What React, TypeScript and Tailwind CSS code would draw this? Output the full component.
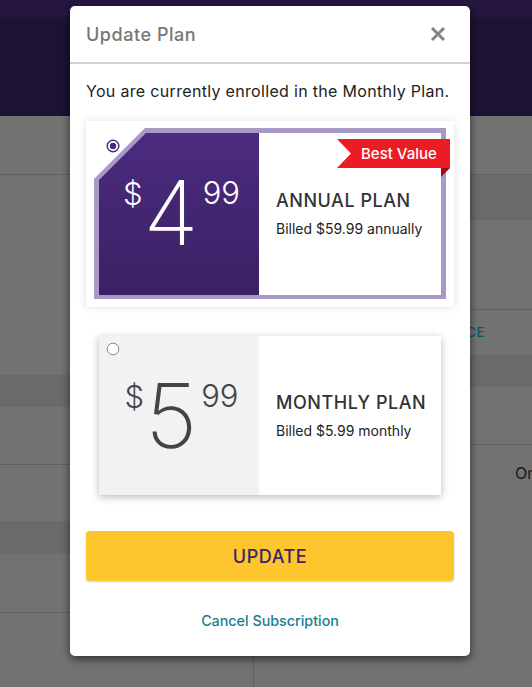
import React, { useState } from 'react';

type Plan = {
    id: string;
    dollars: string;
    cents: string;
    title: string;
    billed: string;
};

const plans: Plan[] = [
    { id: 'annual', dollars: '4', cents: '99', title: 'ANNUAL PLAN', billed: 'Billed $59.99 annually' },
    { id: 'monthly', dollars: '5', cents: '99', title: 'MONTHLY PLAN', billed: 'Billed $5.99 monthly' },
];

const Radio: React.FC<{ checked: boolean }> = ({ checked }) => (
    <svg width="14" height="14" viewBox="0 0 14 14" className="block">
        {checked ? (
            <>
                <circle cx="7" cy="7" r="5.8" fill="white" stroke="#4a2a7e" strokeWidth="1.4" />
                <circle cx="7" cy="7" r="3.2" fill="#4a2a7e" />
            </>
        ) : (
            <circle cx="7" cy="7" r="5.8" fill="white" stroke="#8a8a8a" strokeWidth="1" />
        )}
    </svg>
);

const Price: React.FC<{ plan: Plan; selected: boolean }> = ({ plan, selected }) => (
    <div className={`flex justify-center items-start pt-[35px] pl-[5px] ${selected ? 'text-white' : 'text-[#444]'}`}>
        <span className="text-[31px] leading-none font-light mt-[10px] mr-[1px]">$</span>
        <span className="text-[90px] leading-none font-extralight">{plan.dollars}</span>
        <span className="text-[31px] leading-none font-light mt-[9px] ml-[4px]">{plan.cents}</span>
    </div>
);

const PlanText: React.FC<{ plan: Plan }> = ({ plan }) => (
    <div className="flex-1 flex flex-col justify-center pl-[17px] bg-white">
        <div className="text-[18px] leading-none font-medium tracking-[0.03em] text-[#333]">{plan.title}</div>
        <div className="text-[14px] leading-none text-[#222] mt-[12px]">{plan.billed}</div>
    </div>
);

const BestValue: React.FC = () => (
    <div className="absolute left-[251px] top-[18px] w-[113px] h-[38px]">
        <svg width="113" height="38" viewBox="0 0 113 38" className="absolute inset-0">
            <polygon points="0,0 113,0 113,29 0,29 14,14.5" fill="#ec1c24" />
            <polygon points="104,29 113,29 104,38" fill="#9e0c12" />
        </svg>
        <span className="absolute left-[24px] top-[5px] text-[15px] leading-[20px] font-medium text-white">Best Value</span>
    </div>
);

const SelectedPlan: React.FC<{ plan: Plan; onSelect: () => void }> = ({ plan, onSelect }) => (
    <div className="relative bg-white px-[8px] pt-[7px] pb-[8px] shadow-[0_0_8px_rgba(0,0,0,0.12)]" onClick={onSelect}>
        <div className="bg-[#a898c7] p-[5px] pb-[4px] [clip-path:polygon(51px_0,100%_0,100%_100%,0_100%,0_51px)]">
            <div className="flex h-[162px] [clip-path:polygon(47px_0,100%_0,100%_100%,0_100%,0_47px)]">
                <div className="w-[160px] bg-gradient-to-b from-[#4b2b80] to-[#3b2164]">
                    <Price plan={plan} selected />
                </div>
                <PlanText plan={plan} />
            </div>
        </div>
        <div className="absolute left-[20px] top-[18px]">
            <Radio checked />
        </div>
        <BestValue />
    </div>
);

const OtherPlan: React.FC<{ plan: Plan; onSelect: () => void }> = ({ plan, onSelect }) => (
    <div className="relative mx-[13px] flex h-[159px] shadow-[0_2px_8px_rgba(0,0,0,0.28)]" onClick={onSelect}>
        <div className="w-[160px] bg-[#f2f2f2]">
            <Price plan={plan} selected={false} />
        </div>
        <PlanText plan={plan} />
        <div className="absolute left-[7px] top-[6px]">
            <Radio checked={false} />
        </div>
    </div>
);

const Background: React.FC = () => (
    <div className="w-full h-full flex flex-col bg-[#727272]">
        <div className="h-[17px] bg-[#24163f]" />
        <div className="h-[99px] bg-[#1c1232]" />
        <div className="flex flex-1">
            <div className="w-[254px] shrink-0 flex flex-col border-r border-[#606060]">
                <div className="h-[59px] border-b border-[#606060]" />
                <div className="h-[200px]" />
                <div className="h-[32px] bg-[#6a6a6a]" />
                <div className="h-[58px] border-b border-[#606060]" />
                <div className="h-[56px]" />
                <div className="h-[33px] bg-[#6a6a6a]" />
                <div className="h-[59px] border-b border-[#606060]" />
            </div>
            <div className="flex-1 min-w-0 overflow-hidden flex flex-col">
                <div className="h-[59px] border-b border-[#606060]" />
                <div className="h-[45px] bg-[#6a6a6a]" />
                <div className="h-[90px] border-b border-[#606060]" />
                <div className="h-[45px] flex items-center justify-end pr-[47px] text-[13px] font-medium tracking-[0.05em] text-[#0d5663]">
                    ADD BALANCE
                </div>
                <div className="h-[32px] bg-[#6a6a6a]" />
                <div className="h-[58px] border-b border-[#606060]" />
                <div className="h-[55px] flex items-center pl-[261px] text-[16px] text-[#181818] whitespace-nowrap">One</div>
            </div>
        </div>
    </div>
);

export default function App() {
    const [selected, setSelected] = useState('annual');

    return (
        <div className="relative w-full h-[687px] overflow-hidden font-['Inter',sans-serif]">
            <Background />

            <div className="absolute left-[70px] top-[6px] w-[400px] bg-white rounded-[5px] shadow-[0_3px_8px_rgba(0,0,0,0.6)]">
                <div className="flex items-center justify-between h-[58px] px-[16px] border-b-2 border-[#d2d2d2]">
                    <h2 className="text-[18px] font-medium tracking-[0.03em] text-[#777]">Update Plan</h2>
                    <button type="button" className="w-[16px] h-[16px] mr-[8px]">
                        <svg width="16" height="16" viewBox="0 0 16 16">
                            <path d="M2 2 L14 14 M14 2 L2 14" stroke="#858585" strokeWidth="3" strokeLinecap="butt" />
                        </svg>
                    </button>
                </div>

                <div className="px-[16px] pb-[24px]">
                    <p className="mt-[17px] text-[16px] leading-[20px] tracking-[0.02em] text-[#222]">You are currently enrolled in the Monthly Plan.</p>

                    <div className="mt-[20px] flex flex-col">
                        {plans.map((plan, i) => (
                            <div key={plan.id} className={i > 0 ? 'mt-[29px]' : ''}>
                                {selected === plan.id ? (
                                    <SelectedPlan plan={plan} onSelect={() => setSelected(plan.id)} />
                                ) : (
                                    <OtherPlan plan={plan} onSelect={() => setSelected(plan.id)} />
                                )}
                            </div>
                        ))}
                    </div>

                    <button
                        type="button"
                        className="mt-[36px] w-full h-[50px] rounded-[4px] bg-[#fec62d] shadow-[0_1px_2px_rgba(0,0,0,0.2)] text-[18px] font-medium tracking-[0.03em] text-[#3d2468]"
                    >
                        UPDATE
                    </button>

                    <div className="mt-[27px] text-center">
                        <a className="text-[14.3px] font-medium text-[#16808f] cursor-pointer">Cancel Subscription</a>
                    </div>
                </div>
            </div>
        </div>
    );
}
